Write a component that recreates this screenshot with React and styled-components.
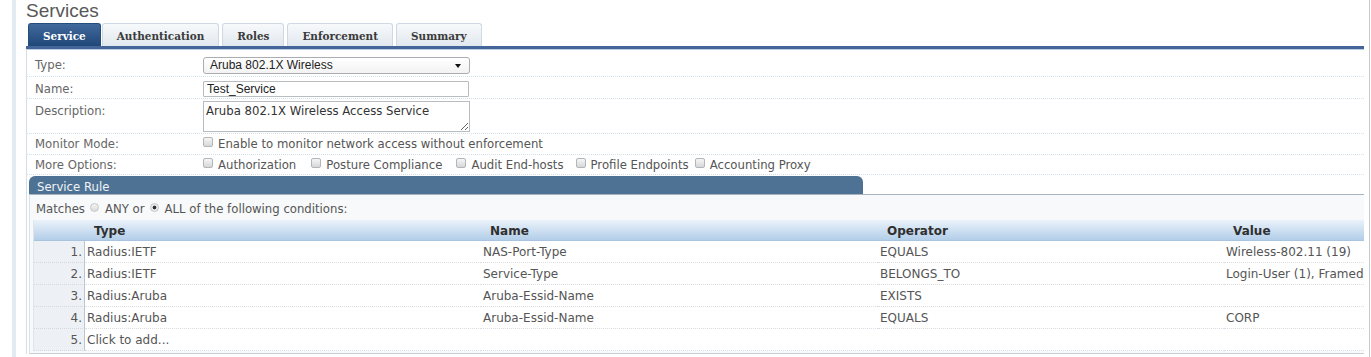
import React from "react";
import styled, { createGlobalStyle } from "styled-components";

const GlobalStyle = createGlobalStyle`
  html, body { margin: 0; padding: 0; background: #ffffff; overflow: hidden; }
  body { font-family: "DejaVu Sans", Verdana, sans-serif; }
  * { box-sizing: border-box; }
`;

const Page = styled.div`
  margin-left: 12px;
  width: 1358px;
  height: 357px;
  border-left: 4px solid #e2eaf2;
  border-right: 1px solid #c6cacd;
  padding: 0 5px 0 10px;
  background: #fff;
`;

const Title = styled.h1`
  margin: 0 0 1px 0;
  height: 22px;
  line-height: 22px;
  font-family: "Liberation Sans", Arial, sans-serif;
  font-weight: 400;
  font-size: 19px;
  color: #585858;
`;

const TabBar = styled.div`
  display: flex;
  align-items: flex-end;
  gap: 3px;
  height: 26px;
  padding-left: 2px;
  border-bottom: 3px solid #44659a;
  box-shadow: 0 1px 0 #bfcfe2;
`;

const Tab = styled.div`
  height: 23px;
  padding: 4px 14px 0;
  margin-left: ${(p) => (p.$tight ? "-2px" : "0")};
  border: 1px solid ${(p) => (p.$active ? "#244d7e" : "#cfd9e4")};
  border-bottom: none;
  border-radius: 3px 3px 0 0;
  background: ${(p) =>
    p.$active
      ? "linear-gradient(#41699c, #1f4778)"
      : "linear-gradient(#f7f9fb, #e1e8ef)"};
  color: ${(p) => (p.$active ? "#ffffff" : "#3b3b3b")};
  font-family: "DejaVu Serif", Georgia, serif;
  font-weight: 700;
  font-size: 10.45px;
  line-height: 17px;
  white-space: nowrap;
`;

const FormBox = styled.div`
  border-left: 1px solid #d6dee5;
`;

const FieldRow = styled.div`
  display: grid;
  grid-template-columns: 176px 1fr;
  align-items: center;
  height: ${(p) => p.$h}px;
  padding-top: ${(p) => p.$pt || 0}px;
  border-bottom: 1px dotted #d3e1ea;
`;

const Label = styled.div`
  padding-left: 8px;
  font-size: 11.7px;
  color: #666;
  align-self: ${(p) => (p.$top ? "start" : "center")};
  padding-top: ${(p) => (p.$top ? "5px" : "0")};
  white-space: nowrap;
`;

const Field = styled.div`
  display: flex;
  align-items: center;
  white-space: nowrap;
`;

const SelectBox = styled.div`
  position: relative;
  width: 267px;
  height: 17px;
  border: 1px solid #a9adb2;
  border-radius: 3px;
  background: linear-gradient(#ffffff, #f3f3f3);
  padding-left: 6px;
  font-family: "Liberation Sans", Arial, sans-serif;
  font-size: 12px;
  line-height: 15px;
  color: #222;
`;

const Caret = styled.span`
  position: absolute;
  right: 8px;
  top: 6px;
  width: 0;
  height: 0;
  border-left: 3px solid transparent;
  border-right: 3px solid transparent;
  border-top: 4px solid #111;
`;

const TextInput = styled.input`
  width: 266px;
  height: 16px;
  border: 1px solid #b9bcbf;
  border-radius: 1px;
  padding: 0 3px;
  font-family: "Liberation Sans", Arial, sans-serif;
  font-size: 12px;
  color: #222;
  outline: none;
  background: #fff;
`;

const TextArea = styled.textarea`
  width: 267px;
  height: 31px;
  border: 1px solid #b9bcbf;
  padding: 2px 2px;
  font-family: "DejaVu Sans", Verdana, sans-serif;
  font-size: 11.7px;
  line-height: 14px;
  color: #333;
  outline: none;
  display: block;
`;

const Check = styled.span`
  display: inline-block;
  flex: none;
  width: 10px;
  height: 10px;
  margin-right: 5px;
  border: 1px solid #b3b6b9;
  border-radius: 2px;
  background: linear-gradient(#f6f6f6, #d6d7d8);
  position: relative;
  top: -2px;
`;

const Option = styled.span`
  display: inline-flex;
  align-items: center;
  margin-right: ${(p) => p.$gap}px;
  font-size: 11.7px;
  color: #555;
`;

const RuleHeader = styled.div`
  margin: 1px 0 0 2px;
  width: 834px;
  height: 18px;
  border-radius: 6px 6px 0 0;
  background: #4e7293;
  color: #eef3f7;
  font-size: 11.7px;
  line-height: 16px;
  padding: 3px 0 0 8px;
`;

const RuleBody = styled.div`
  margin-left: 2px;
  border-top: 1px solid #a7b4c0;
  border-left: 1px solid #d9e0e6;
  border-bottom: 1px solid #c7ced4;
  background: #f7f9fa;
  padding-bottom: 2px;
`;

const Matches = styled.div`
  display: flex;
  align-items: center;
  height: 25px;
  padding: 3px 0 0 6px;
  font-size: 11.7px;
  color: #555;
  white-space: nowrap;
`;

const Radio = styled.span`
  display: inline-block;
  width: 9px;
  height: 9px;
  margin: 0 6px 0 5px;
  border: 1px solid #c3c6c9;
  border-radius: 50%;
  background: ${(p) =>
    p.$on
      ? "radial-gradient(circle, #333 0 1.6px, #e9eaeb 2.2px)"
      : "linear-gradient(#f4f4f4, #dadbdc)"};
  position: relative;
  top: -2px;
`;

const Table = styled.div`
  margin-left: 3px;
  display: grid;
  grid-template-columns: 51px 396px 397px 346px 1fr;
  background: #fff;
  border-left: 1px solid #dfe5ea;
`;

const HeadCell = styled.div`
  height: 21px;
  padding-left: 9px;
  background: linear-gradient(#eaf2fa, #b3cee9);
  border-bottom: 1px solid #a9c4df;
  font-weight: 700;
  font-size: 12px;
  line-height: 22px;
  color: #2f2f2f;
  white-space: nowrap;
`;

const NumCell = styled.div`
  height: 22px;
  background: #edf1f6;
  border-right: 1px solid #b9c6d3;
  border-bottom: 1px dotted #d2d9df;
  text-align: right;
  padding-right: 2px;
  font-size: 12px;
  line-height: 23px;
  color: #555;
`;

const Cell = styled.div`
  height: 22px;
  padding-left: 2px;
  border-bottom: 1px dotted #d8dee3;
  font-size: 12px;
  line-height: 23px;
  color: #555;
  white-space: nowrap;
  overflow: hidden;
`;

const tabs = ["Service", "Authentication", "Roles", "Enforcement", "Summary"];

const rows = [
  ["Radius:IETF", "NAS-Port-Type", "EQUALS", "Wireless-802.11 (19)"],
  ["Radius:IETF", "Service-Type", "BELONGS_TO", "Login-User (1), Framed"],
  ["Radius:Aruba", "Aruba-Essid-Name", "EXISTS", ""],
  ["Radius:Aruba", "Aruba-Essid-Name", "EQUALS", "CORP"],
  ["Click to add...", "", "", ""],
];

const options = [
  ["Authorization", 15],
  ["Posture Compliance", 14],
  ["Audit End-hosts", 12],
  ["Profile Endpoints", 6],
  ["Accounting Proxy", 0],
];

export default function App() {
  return (
    <>
      <GlobalStyle />
      <Page>
        <Title>Services</Title>
        <TabBar>
          {tabs.map((t, i) => (
            <Tab key={t} $active={i === 0} $tight={i === 1}>
              {t}
            </Tab>
          ))}
        </TabBar>
        <FormBox>
          <FieldRow $h={28} $pt={5}>
            <Label>Type:</Label>
            <Field>
              <SelectBox>
                Aruba 802.1X Wireless
                <Caret />
              </SelectBox>
            </Field>
          </FieldRow>
          <FieldRow $h={22} $pt={2}>
            <Label>Name:</Label>
            <Field>
              <TextInput readOnly defaultValue="Test_Service" />
            </Field>
          </FieldRow>
          <FieldRow $h={35}>
            <Label $top>Description:</Label>
            <Field>
              <TextArea readOnly defaultValue="Aruba 802.1X Wireless Access Service" />
            </Field>
          </FieldRow>
          <FieldRow $h={21}>
            <Label>Monitor Mode:</Label>
            <Field>
              <Option $gap={0}>
                <Check />
                Enable to monitor network access without enforcement
              </Option>
            </Field>
          </FieldRow>
          <FieldRow $h={20}>
            <Label>More Options:</Label>
            <Field>
              {options.map(([t, g]) => (
                <Option key={t} $gap={g}>
                  <Check />
                  {t}
                </Option>
              ))}
            </Field>
          </FieldRow>
          <RuleHeader>Service Rule</RuleHeader>
          <RuleBody>
            <Matches>
              Matches
              <Radio />
              ANY or
              <Radio $on />
              ALL of the following conditions:
            </Matches>
            <Table>
              <HeadCell />
              <HeadCell>Type</HeadCell>
              <HeadCell>Name</HeadCell>
              <HeadCell>Operator</HeadCell>
              <HeadCell>Value</HeadCell>
              {rows.map((r, i) => (
                <React.Fragment key={i}>
                  <NumCell>{i + 1}.</NumCell>
                  {r.map((c, j) => (
                    <Cell key={j}>{c}</Cell>
                  ))}
                </React.Fragment>
              ))}
            </Table>
          </RuleBody>
        </FormBox>
      </Page>
    </>
  );
}
